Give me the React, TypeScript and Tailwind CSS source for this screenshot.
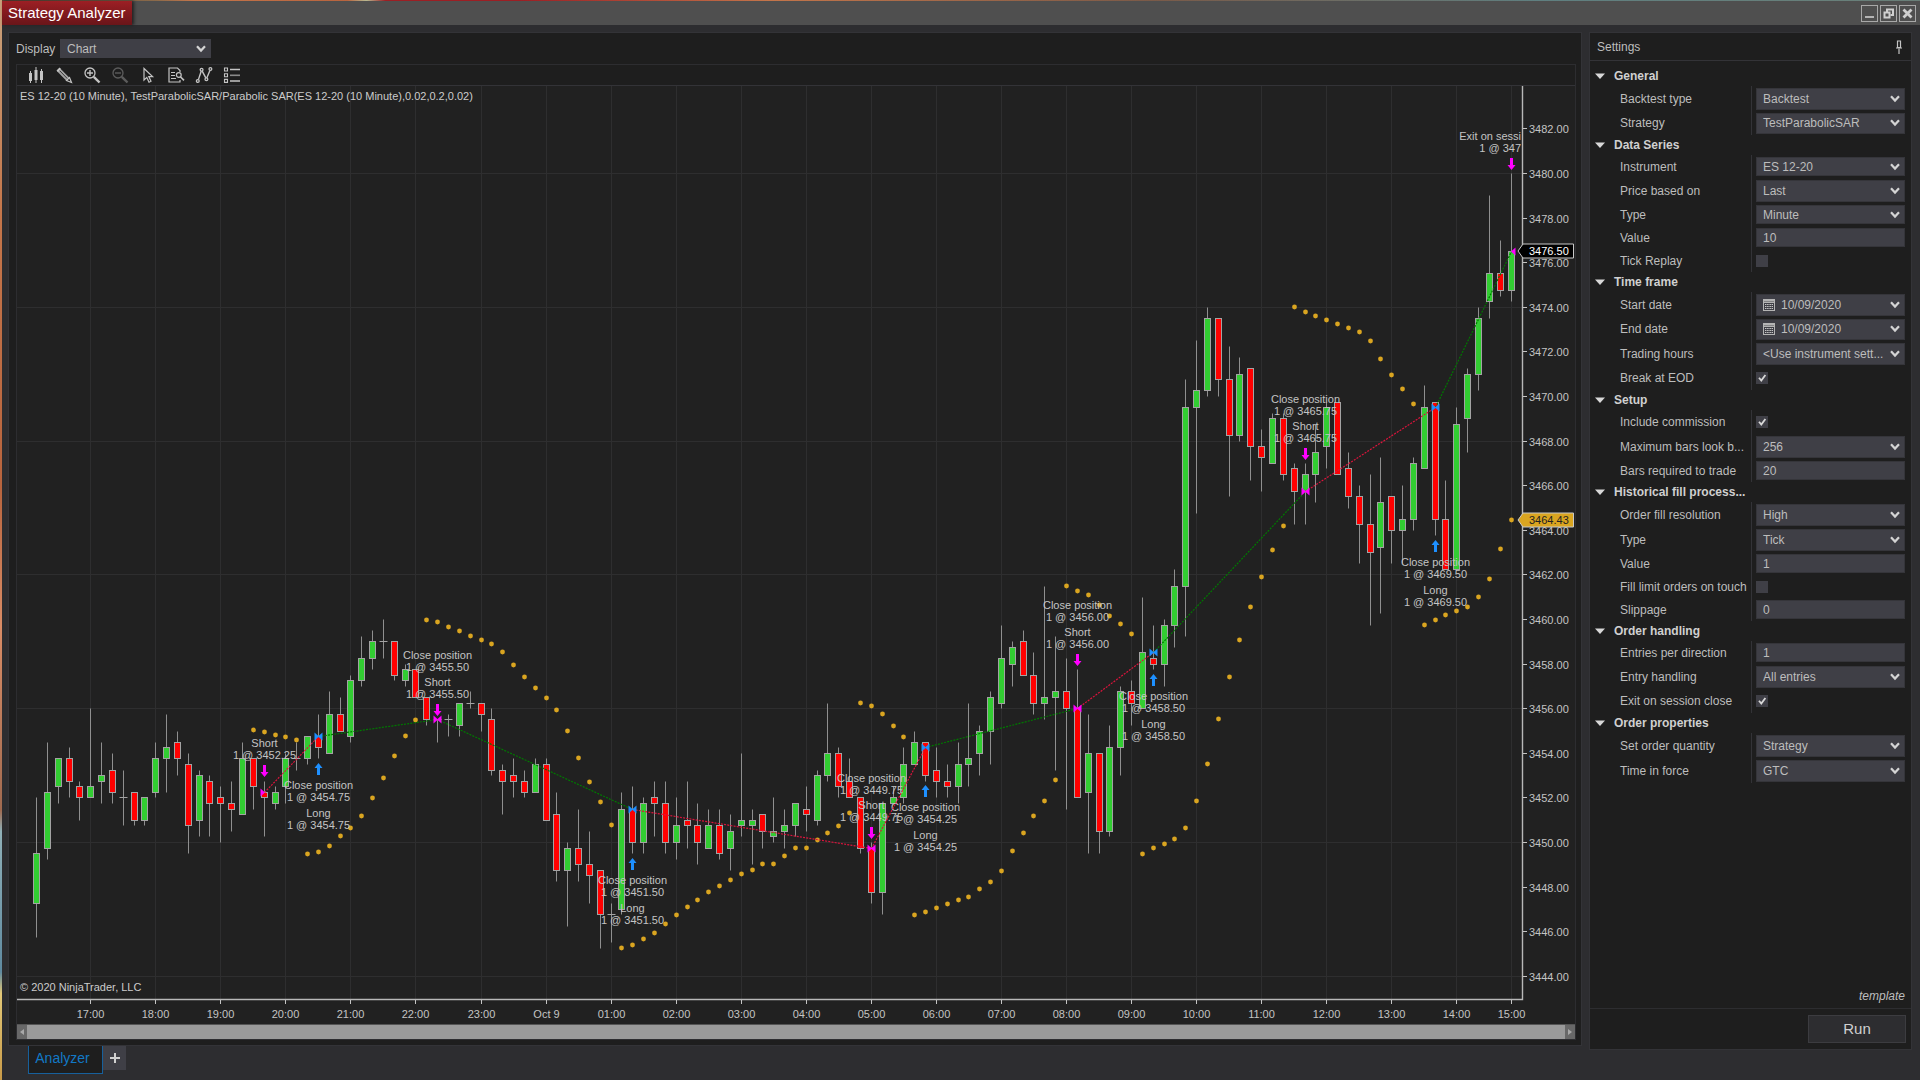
import { useState } from "react";
import type { ReactNode } from "react";
import clsx from "clsx";

// high, body top, body bottom, low (quarter point ticks from 3450), direction
type Candle = [number, number, number, number, "u" | "d"];

const CANDLES: Candle[] = [
  [8, -2, -11, -17, "u"],
  [18, 9, -1, -3, "u"],
  [15, 15, 10, 7, "u"],
  [17, 15, 11, 8, "d"],
  [11, 10, 8, 4, "d"],
  [24, 10, 8, 8, "u"],
  [18, 12, 11, 7, "u"],
  [16, 13, 9, 7, "d"],
  [13, 8, 8, 3, "d"],
  [9, 9, 4, 3, "d"],
  [8, 8, 4, 3, "u"],
  [18, 15, 9, 8, "u"],
  [23, 17, 15, 9, "u"],
  [20, 18, 15, 12, "d"],
  [16, 14, 3, -2, "d"],
  [13, 12, 4, 1, "u"],
  [12, 11, 7, 1, "d"],
  [10, 8, 7, 0, "d"],
  [11, 7, 6, 2, "d"],
  [18, 15, 5, 5, "u"],
  [15, 15, 10, 6, "d"],
  [11, 9, 8, 1, "d"],
  [10, 9, 7, 6, "u"],
  [16, 15, 10, 7, "u"],
  [18, 15, 15, 13, "d"],
  [19, 19, 15, 14, "u"],
  [23, 19, 17, 15, "d"],
  [27, 23, 16, 16, "u"],
  [26, 23, 20, 20, "d"],
  [30, 29, 19, 18, "u"],
  [37, 33, 29, 28, "u"],
  [38, 36, 33, 31, "u"],
  [40, 36, 36, 33, "d"],
  [36, 36, 30, 29, "d"],
  [32, 31, 29, 28, "u"],
  [31, 31, 26, 26, "d"],
  [26, 26, 22, 21, "d"],
  [22, 22, 22, 18, "d"],
  [23, 22, 22, 19, "d"],
  [25, 25, 21, 19, "u"],
  [27, 25, 25, 24, "d"],
  [25, 25, 23, 20, "d"],
  [24, 22, 13, 12, "d"],
  [14, 13, 11, 5, "d"],
  [15, 12, 11, 8, "d"],
  [13, 11, 9, 8, "d"],
  [15, 14, 9, 9, "u"],
  [15, 14, 4, 4, "d"],
  [9, 5, -5, -7, "d"],
  [0, -1, -5, -15, "u"],
  [6, -1, -4, -7, "d"],
  [2, -4, -6, -11, "d"],
  [-5, -5, -13, -19, "d"],
  [-11, -13, -13, -18, "d"],
  [9, 6, -12, -13, "u"],
  [10, 6, 0, -2, "d"],
  [8, 7, 0, -2, "u"],
  [11, 8, 7, 1, "d"],
  [11, 7, 0, -2, "d"],
  [8, 3, 0, -3, "u"],
  [11, 4, 3, -1, "d"],
  [7, 3, 0, -4, "d"],
  [6, 3, -1, -1, "u"],
  [6, 3, -2, -3, "d"],
  [5, 2, -1, -5, "u"],
  [16, 4, 3, 1, "u"],
  [6, 4, 3, -4, "u"],
  [5, 5, 2, -1, "d"],
  [8, 2, 1, 0, "u"],
  [6, 3, 2, -1, "u"],
  [7, 7, 3, 1, "u"],
  [10, 6, 5, 2, "d"],
  [13, 12, 4, 3, "u"],
  [25, 16, 12, 11, "u"],
  [17, 16, 10, 8, "d"],
  [15, 11, 8, 8, "d"],
  [8, 8, -1, -2, "d"],
  [0, -1, -9, -11, "d"],
  [7, 7, -9, -13, "u"],
  [10, 8, 7, 7, "u"],
  [17, 14, 8, 7, "u"],
  [20, 18, 14, 14, "u"],
  [18, 18, 12, 11, "d"],
  [17, 13, 11, 8, "d"],
  [14, 11, 10, 8, "d"],
  [18, 14, 10, 7, "u"],
  [25, 15, 14, 10, "u"],
  [21, 20, 16, 12, "u"],
  [27, 26, 20, 14, "u"],
  [39, 33, 25, 24, "u"],
  [36, 35, 32, 28, "u"],
  [38, 36, 30, 30, "d"],
  [34, 30, 25, 23, "d"],
  [46, 26, 25, 22, "u"],
  [37, 27, 26, 13, "u"],
  [33, 27, 24, 6, "d"],
  [31, 24, 8, 8, "d"],
  [23, 16, 9, -2, "u"],
  [16, 16, 2, -2, "d"],
  [21, 17, 2, 1, "u"],
  [28, 27, 17, 12, "u"],
  [29, 27, 25, 21, "d"],
  [44, 34, 24, 24, "u"],
  [39, 33, 32, 31, "d"],
  [40, 39, 32, 28, "u"],
  [49, 46, 39, 35, "u"],
  [83, 78, 46, 37, "u"],
  [90, 81, 78, 59, "u"],
  [96, 94, 81, 80, "u"],
  [94, 94, 83, 80, "d"],
  [89, 83, 73, 62, "d"],
  [87, 84, 73, 72, "u"],
  [85, 85, 71, 65, "d"],
  [74, 71, 69, 63, "d"],
  [77, 76, 68, 68, "u"],
  [77, 76, 66, 65, "d"],
  [68, 67, 63, 57, "d"],
  [68, 66, 63, 57, "u"],
  [75, 70, 66, 61, "u"],
  [79, 78, 71, 67, "u"],
  [79, 79, 66, 66, "d"],
  [70, 67, 62, 60, "d"],
  [64, 62, 57, 50, "d"],
  [66, 57, 52, 39, "d"],
  [69, 61, 53, 41, "u"],
  [62, 62, 56, 50, "d"],
  [64, 58, 56, 50, "u"],
  [69, 68, 58, 56, "u"],
  [82, 78, 67, 67, "u"],
  [79, 79, 58, 55, "d"],
  [65, 58, 49, 49, "d"],
  [78, 75, 49, 49, "u"],
  [85, 84, 76, 70, "u"],
  [96, 94, 84, 81, "u"],
  [116, 102, 97, 94, "u"],
  [108, 102, 99, 98, "d"],
  [120, 106, 99, 97, "u"],
];

// Parabolic SAR runs: first bar, then one height per bar
const SAR: { start: number; ys: number[] }[] = [
  { start: 20, ys: [730, 732, 735, 737, 740] },
  { start: 25, ys: [854, 852, 846, 836, 828, 816, 798, 778, 756, 736, 720] },
  {
    start: 36,
    ys: [620, 622, 627, 631, 636, 640, 644, 652, 665, 677, 688, 698, 710, 731, 758, 782, 802, 825],
  },
  {
    start: 54,
    ys: [948, 945, 939, 933, 924, 915, 907, 900, 892, 886, 880, 874, 870, 864, 864, 856, 848, 848, 840, 833, 826, 813],
  },
  { start: 76, ys: [703, 706, 714, 726, 737] },
  {
    start: 81,
    ys: [915, 912, 908, 904, 900, 897, 889, 882, 871, 851, 833, 816, 801, 780],
  },
  { start: 95, ys: [586, 591, 595, 605, 616, 624, 634] },
  {
    start: 102,
    ys: [854, 848, 844, 839, 828, 801, 764, 719, 677, 640, 607, 577, 550, 526],
  },
  {
    start: 116,
    ys: [307, 312, 316, 320, 324, 328, 332, 341, 359, 375, 389, 404],
  },
  { start: 128, ys: [625, 620, 615, 611, 607, 597, 579, 549, 520] },
];

type Trade = {
  bar: number;
  tick: number;
  side: "Short" | "Long";
  price: string;
  arrow: number;
  lineTo?: "win" | "loss";
};

const TRADES: Trade[] = [
  { bar: 21, tick: 9, side: "Short", price: "3452.25", arrow: 765, lineTo: "loss" },
  { bar: 26, tick: 19, side: "Long", price: "3454.75", arrow: 763, lineTo: "win" },
  { bar: 37, tick: 22, side: "Short", price: "3455.50", arrow: 704, lineTo: "win" },
  { bar: 55, tick: 6, side: "Long", price: "3451.50", arrow: 858, lineTo: "loss" },
  { bar: 77, tick: -1, side: "Short", price: "3449.75", arrow: 827, lineTo: "loss" },
  { bar: 82, tick: 17, side: "Long", price: "3454.25", arrow: 785, lineTo: "win" },
  { bar: 96, tick: 24, side: "Short", price: "3456.00", arrow: 654, lineTo: "loss" },
  { bar: 103, tick: 34, side: "Long", price: "3458.50", arrow: 674, lineTo: "win" },
  { bar: 117, tick: 63, side: "Short", price: "3465.75", arrow: 448, lineTo: "loss" },
  { bar: 129, tick: 78, side: "Long", price: "3469.50", arrow: 540, lineTo: "win" },
  { bar: 136, tick: 106, side: "Short", price: "3476.50", arrow: 158 },
];

const HOURS = [
  "17:00", "18:00", "19:00", "20:00", "21:00", "22:00", "23:00", "Oct 9",
  "01:00", "02:00", "03:00", "04:00", "05:00", "06:00", "07:00", "08:00",
  "09:00", "10:00", "11:00", "12:00", "13:00", "14:00",
];

const TIME_AXIS = [
  ...HOURS.map((label, i) => ({ label, bar: 5 + i * 6 })),
  { label: "15:00", bar: 136 },
];

const PRICES = Array.from({ length: 20 }, (_, i) => 3444 + i * 2);

const barX = (bar: number) => Math.round(36 + bar * 10.842) + 0.5;
const tickY = (tick: number) => Math.round(842 - tick * 5.575) + 0.5;
const priceY = (price: number) => tickY((price - 3450) * 4);

const AXIS_X = 1522.5;
const AXIS_Y = 999.5;

function Chart() {
  return (
    <svg
      viewBox="17 86 1558 938"
      preserveAspectRatio="xMinYMin meet"
      className="block h-full w-full bg-[#212121] text-[11px]"
      role="img"
      aria-label="ES 12-20 price chart"
    >
      <g stroke="#2e2e2f" strokeWidth={1}>
        {TIME_AXIS.map(({ label, bar }) => (
          <line key={label} x1={barX(bar)} x2={barX(bar)} y1={86} y2={AXIS_Y} />
        ))}
        {PRICES.filter((p) => (p - 3444) % 6 === 0).map((p) => (
          <line key={p} x1={17} x2={AXIS_X} y1={priceY(p)} y2={priceY(p)} />
        ))}
      </g>

      {CANDLES.map(([high, top, bottom, low, dir], i) => {
        const x = barX(i);
        const y = tickY(top);
        return (
          <g key={i} stroke="#a3a3a3">
            <line x1={x} x2={x} y1={tickY(high)} y2={tickY(low)} stroke="#8f8f8f" />
            {top === bottom ? (
              <line x1={x - 4} x2={x + 4} y1={y} y2={y} />
            ) : (
              <rect
                x={x - 3}
                y={y}
                width={6}
                height={tickY(bottom) - y}
                fill={dir === "u" ? "#32cd32" : "#ff0000"}
              />
            )}
          </g>
        );
      })}

      <g fill="#daa520">
        {SAR.map(({ start, ys }) =>
          ys.map((y, i) => (
            <circle key={start + i} cx={barX(start + i)} cy={y} r={2.4} />
          ))
        )}
      </g>

      {TRADES.map((t) => (
        <TradeText key={t.bar} trade={t} />
      ))}

      {TRADES.slice(0, -1).map((t, i) => {
        const next = TRADES[i + 1];
        return (
          <line
            key={t.bar}
            x1={barX(t.bar)}
            y1={tickY(t.tick)}
            x2={barX(next.bar)}
            y2={tickY(next.tick)}
            stroke={t.lineTo === "win" ? "#007800" : "#dc143c"}
            strokeWidth={1.2}
            strokeDasharray="2 1.2"
          />
        );
      })}

      {TRADES.map((t, i) => (
        <TradeMarker
          key={t.bar}
          trade={t}
          entry={i < TRADES.length - 1}
          exit={i > 0}
        />
      ))}

      {/* Axes */}
      <path d={`M${AXIS_X} 86V${AXIS_Y}H17`} fill="none" stroke="#b8b8b8" strokeWidth={1.4} />
      <g fill="#c4c4c4" stroke="none">
        {PRICES.map((p) => (
          <g key={p}>
            <rect x={1523} y={priceY(p) - 0.5} width={4} height={1} />
            <text x={1529} y={priceY(p) + 4}>
              {p.toFixed(2)}
            </text>
          </g>
        ))}
        {TIME_AXIS.map(({ label, bar }) => (
          <g key={label}>
            <rect x={barX(bar) - 0.5} y={1000} width={1} height={4} />
            <text x={barX(bar)} y={1018} textAnchor="middle">
              {label}
            </text>
          </g>
        ))}
      </g>

      <PriceTag y={251} label="3476.50" fill="#000000" ink="#ffffff" />
      <PriceTag y={520} label="3464.43" fill="#daa520" ink="#222222" />

      <g fill="#cccccc">
        <text x={20} y={100}>
          ES 12-20 (10 Minute), TestParabolicSAR/Parabolic SAR(ES 12-20 (10 Minute),0.02,0.2,0.02)
        </text>
        <text x={20} y={991}>
          © 2020 NinjaTrader, LLC
        </text>
      </g>
    </svg>
  );
}

function TradeText({ trade }: { trade: Trade }) {
  const { bar, side, price, arrow } = trade;
  const x = barX(bar);

  // The last label runs into the price axis and is cut there
  if (bar === 136) {
    return (
      <g fill="#c4c4c4" textAnchor="end">
        <text x={1521} y={140}>Exit on sessi</text>
        <text x={1521} y={152}>1 @ 347</text>
      </g>
    );
  }

  const rows =
    side === "Short"
      ? [arrow - 45, arrow - 33, arrow - 18, arrow - 6]
      : [arrow + 26, arrow + 38, arrow + 54, arrow + 66];

  return (
    <g fill="#c4c4c4" textAnchor="middle">
      {bar !== 21 && (
        <>
          <text x={x} y={rows[0]}>Close position</text>
          <text x={x} y={rows[1]}>1 @ {price}</text>
        </>
      )}
      <text x={x} y={rows[2]}>{side}</text>
      <text x={x} y={rows[3]}>1 @ {price}</text>
    </g>
  );
}

function TradeMarker({ trade, entry, exit }: { trade: Trade; entry: boolean; exit: boolean }) {
  const x = barX(trade.bar);
  const y = tickY(trade.tick);
  const a = trade.arrow;
  const isShort = trade.side === "Short";

  return (
    <g fill={isShort ? "#ff00ff" : "#1e90ff"}>
      {entry && <path d={`M${x - 4} ${y - 4}L${x + 0.5} ${y}L${x - 4} ${y + 4}Z`} />}
      {exit && <path d={`M${x + 4} ${y - 4}L${x - 0.5} ${y}L${x + 4} ${y + 4}Z`} />}
      {isShort ? (
        <path d={`M${x - 1.5} ${a}h3v7h2.5l-4 5l-4 -5h2.5z`} />
      ) : (
        <path d={`M${x - 1.5} ${a + 12}h3v-7h2.5l-4 -5l-4 5h2.5z`} />
      )}
    </g>
  );
}

function PriceTag({ y, label, fill, ink }: { y: number; label: string; fill: string; ink: string }) {
  return (
    <g>
      <path
        d={`M1518 ${y}L1523 ${y - 7}H1573.5V${y + 7}H1523Z`}
        fill={fill}
        stroke="#c8c8c8"
        strokeWidth={1}
      />
      <text x={1529} y={y + 4} fill={ink}>
        {label}
      </text>
    </g>
  );
}

function Chevron({ className }: { className?: string }) {
  return (
    <svg viewBox="0 0 10 8" className={clsx("h-2 w-2.5", className)} aria-hidden="true">
      <path d="M1 1.2L5 5.6L9 1.2" fill="none" stroke="#d4d4d4" strokeWidth={2.2} />
    </svg>
  );
}

function CalendarIcon({ className }: { className?: string }) {
  return (
    <svg viewBox="0 0 12 12" className={clsx("h-3 w-3", className)} aria-hidden="true">
      <path d="M0 0h12v12H0z" fill="#b4b4b4" />
      <path d="M1 4h10v7H1z" fill="#3f3f46" />
      <path d="M1 2.5h10" stroke="#77777a" strokeWidth={0.8} />
      <path d="M2 5.5h8M2 7.5h8M2 9.5h8" stroke="#c8c8c8" strokeWidth={1} strokeDasharray="1.2 0.5" />
    </svg>
  );
}

const TOOLS: { name: string; icon: ReactNode; dim?: boolean }[] = [
  {
    name: "Chart style",
    icon: (
      <g fill="currentColor">
        <path d="M1 6h3v8H1zM2 4h1v12H2zM6.5 3h3v10h-3zM7.5 0h1v16h-1zM12 4h3v9h-3zM13 2h1v14h-1z" />
      </g>
    ),
  },
  {
    name: "Drawing tools",
    icon: (
      <g>
        <path d="M4 1.2L13.2 10.4L10.2 13.4L1 4.2Z" fill="#a4a4a4" />
        <path d="M3.2 3.2L11.5 11.8" stroke="#2a2a2a" strokeWidth={0.9} />
        <path d="M3.5 0.5L0.5 3.5L2 5L5 2Z" fill="currentColor" />
        <path d="M13.5 10.5L15.5 15.5L10.5 13.5Z" fill="none" stroke="currentColor" strokeWidth={1.2} />
      </g>
    ),
  },
  {
    name: "Zoom in",
    icon: (
      <g fill="none" stroke="currentColor">
        <circle cx={6} cy={6} r={5} strokeWidth={1.3} />
        <path d="M6 3v6M3 6h6" strokeWidth={1.4} />
        <path d="M9.8 9.8L15.5 15.5" strokeWidth={2.4} />
      </g>
    ),
  },
  {
    name: "Zoom out",
    dim: true,
    icon: (
      <g fill="none" stroke="currentColor">
        <circle cx={6} cy={6} r={5} strokeWidth={1.3} />
        <path d="M3 6h6" strokeWidth={1.4} />
        <path d="M9.8 9.8L15.5 15.5" strokeWidth={2.4} />
      </g>
    ),
  },
  {
    name: "Cursor",
    icon: (
      <path
        d="M4 1.5V13L6.8 10.4L9 15.2L11 14.2L8.8 9.6H12.6Z"
        fill="none"
        stroke="currentColor"
        strokeWidth={1.2}
      />
    ),
  },
  {
    name: "Data box",
    icon: (
      <g fill="none" stroke="currentColor" strokeWidth={1.2}>
        <path d="M12 5V3.5L9.5 1H1v14h11v-2" />
        <path d="M3 5.5h4M3 8.5h4M3 11.5h5" />
        <circle cx={10.8} cy={8} r={2.4} />
        <path d="M12.4 9.8L16 13.4" strokeWidth={1.6} />
      </g>
    ),
  },
  {
    name: "Indicators",
    icon: (
      <g fill="none" stroke="currentColor" strokeWidth={1.3}>
        <path d="M2.4 12.6L5.2 4.2M6.2 4.2L9.8 10.8M10.9 10.8L13.9 3.4" strokeWidth={1.4} />
        <circle cx={1.8} cy={14} r={1.4} />
        <circle cx={5.6} cy={2.8} r={1.4} />
        <circle cx={10.4} cy={12.2} r={1.4} />
        <circle cx={14.4} cy={2} r={1.4} />
      </g>
    ),
  },
  {
    name: "Properties",
    icon: (
      <g fill="none" stroke="currentColor">
        <path d="M0.5 1h3v3h-3zM0.5 6.8h3v3h-3zM0.5 12.4h3v3h-3z" strokeWidth={1.1} />
        <path d="M6 2.5h10M6 14h10" strokeWidth={1.6} />
        <path d="M6 8.3h10" stroke="#8a8a8a" strokeWidth={1.6} />
      </g>
    ),
  },
];

type Row = {
  label: string;
  kind: "select" | "text" | "check" | "date";
  value?: string;
  checked?: boolean;
  size: "sm" | "md" | "lg";
};

const GROUPS: { title: string; rows: Row[] }[] = [
  {
    title: "General",
    rows: [
      { label: "Backtest type", kind: "select", value: "Backtest", size: "lg" },
      { label: "Strategy", kind: "select", value: "TestParabolicSAR", size: "md" },
    ],
  },
  {
    title: "Data Series",
    rows: [
      { label: "Instrument", kind: "select", value: "ES 12-20", size: "sm" },
      { label: "Price based on", kind: "select", value: "Last", size: "lg" },
      { label: "Type", kind: "select", value: "Minute", size: "sm" },
      { label: "Value", kind: "text", value: "10", size: "sm" },
      { label: "Tick Replay", kind: "check", checked: false, size: "sm" },
    ],
  },
  {
    title: "Time frame",
    rows: [
      { label: "Start date", kind: "date", value: "10/09/2020", size: "lg" },
      { label: "End date", kind: "date", value: "10/09/2020", size: "md" },
      { label: "Trading hours", kind: "select", value: "<Use instrument sett...", size: "lg" },
      { label: "Break at EOD", kind: "check", checked: true, size: "md" },
    ],
  },
  {
    title: "Setup",
    rows: [
      { label: "Include commission", kind: "check", checked: true, size: "md" },
      { label: "Maximum bars look b...", kind: "select", value: "256", size: "lg" },
      { label: "Bars required to trade", kind: "text", value: "20", size: "sm" },
    ],
  },
  {
    title: "Historical fill process...",
    rows: [
      { label: "Order fill resolution", kind: "select", value: "High", size: "lg" },
      { label: "Type", kind: "select", value: "Tick", size: "lg" },
      { label: "Value", kind: "text", value: "1", size: "sm" },
      { label: "Fill limit orders on touch", kind: "check", checked: false, size: "sm" },
      { label: "Slippage", kind: "text", value: "0", size: "sm" },
    ],
  },
  {
    title: "Order handling",
    rows: [
      { label: "Entries per direction", kind: "text", value: "1", size: "sm" },
      { label: "Entry handling", kind: "select", value: "All entries", size: "lg" },
      { label: "Exit on session close", kind: "check", checked: true, size: "md" },
    ],
  },
  {
    title: "Order properties",
    rows: [
      { label: "Set order quantity", kind: "select", value: "Strategy", size: "lg" },
      { label: "Time in force", kind: "select", value: "GTC", size: "lg" },
    ],
  },
];

const ROW_HEIGHT = { sm: "h-[23px]", md: "h-6", lg: "h-[25px]" };
const FIELD_HEIGHT = { sm: "h-[19px]", md: "h-[21px]", lg: "h-[22px]" };

function SettingRow({ id, row }: { id: string; row: Row }) {
  const [checked, setChecked] = useState(!!row.checked);
  const field = clsx(
    "w-full border border-[#35353a] bg-[#3f3f46] text-[#bdbdbd] outline-none",
    FIELD_HEIGHT[row.size]
  );

  return (
    <div className={clsx("flex", ROW_HEIGHT[row.size])}>
      <label htmlFor={id} className="flex flex-1 items-center whitespace-nowrap border-r border-[#333337] pl-[30px]">
        {row.label}
      </label>
      <div className="relative ml-1 mr-[6px] flex w-[149px] items-center">
        {row.kind === "text" && (
          <input id={id} type="text" defaultValue={row.value} className={clsx(field, "px-[6px]")} />
        )}
        {(row.kind === "select" || row.kind === "date") && (
          <>
            <select
              id={id}
              className={clsx(field, "appearance-none pr-5", row.kind === "date" ? "pl-6" : "pl-[6px]")}
            >
              <option>{row.value}</option>
            </select>
            <Chevron className="pointer-events-none absolute right-[5px]" />
          </>
        )}
        {row.kind === "date" && (
          <CalendarIcon className="pointer-events-none absolute left-[7px]" />
        )}
        {row.kind === "check" && (
          <>
            <input
              id={id}
              type="checkbox"
              checked={checked}
              onChange={(e) => setChecked(e.target.checked)}
              className="h-3 w-3 appearance-none bg-[#3f3f46]"
            />
            {checked && (
              <svg viewBox="0 0 12 12" className="pointer-events-none absolute left-0 h-3 w-3" aria-hidden="true">
                <path d="M3 5.8L5.3 8.6L9.4 3" fill="none" stroke="#d8d8d8" strokeWidth={1.8} />
              </svg>
            )}
          </>
        )}
      </div>
    </div>
  );
}

function SettingsPanel() {
  return (
    <aside className="mb-[30px] flex w-[323px] flex-none flex-col border border-[#333337] bg-[#1e1e1e] text-[12px] text-[#bdbdbd]">
      <header className="flex h-7 items-center justify-between border-b border-[#333337] pl-[7px] pr-2">
        <h2>Settings</h2>
        <button type="button" aria-label="Pin panel" className="text-[#c4c4c4]">
          <svg viewBox="0 0 8 14" className="h-3.5 w-2" fill="none" stroke="currentColor">
            <path d="M2.5 1h3v6.5h-3zM1 8h6" strokeWidth={1.2} />
            <path d="M4 8.5V14" strokeWidth={1.2} />
          </svg>
        </button>
      </header>

      <div className="flex-1 pt-[5px]">
        {GROUPS.map((group, g) => (
          <section key={group.title}>
            <h3 className="flex h-5 items-center font-bold text-[#d0d0d0]">
              <svg viewBox="0 0 10 6" className="ml-[5px] mr-[9px] h-[6px] w-2.5" aria-hidden="true">
                <path d="M0 0.5h10L5 6z" fill="#d8d8d8" />
              </svg>
              {group.title}
            </h3>
            {group.rows.map((row, r) => (
              <SettingRow key={row.label} id={`setting-${g}-${r}`} row={row} />
            ))}
          </section>
        ))}
      </div>

      <a href="#template" className="self-end pb-1 pr-[6px] italic leading-4">
        template
      </a>
      <footer className="flex h-[41px] items-center justify-end border-t border-[#2d2d30] pr-[5px]">
        <button
          type="button"
          className="h-7 w-[98px] border border-[#3c3c40] bg-[#2d2d30] text-[15px] text-[#d0d0d0]"
        >
          Run
        </button>
      </footer>
    </aside>
  );
}

function WindowButton({ label, children }: { label: string; children: ReactNode }) {
  return (
    <button type="button" aria-label={label} className="h-[17px] w-[17px] border border-[#a8a8a8]">
      <svg viewBox="0 0 15 15" className="h-[15px] w-[15px]" fill="none" stroke="#cfcfcf">
        {children}
      </svg>
    </button>
  );
}

function TitleBar() {
  return (
    <header className="flex h-6 items-center justify-between bg-[#4f4f4f]">
      <h1 className="flex h-full items-center bg-linear-to-b from-[#9c1f24] to-[#6a1519] px-[6px] text-[15px] text-white shadow-[2px_0_3px_#222]">
        Strategy Analyzer
      </h1>
      <div className="flex gap-[2px] pr-1">
        <WindowButton label="Minimize">
          <path d="M3 11h9" strokeWidth={1.6} />
        </WindowButton>
        <WindowButton label="Restore">
          <path d="M6 6V3.5h6V9H9.5" strokeWidth={2} />
          <path d="M3.5 6.5h5v5h-5z" strokeWidth={2} />
        </WindowButton>
        <WindowButton label="Close">
          <path d="M3.5 3.5l8 8M11.5 3.5l-8 8" strokeWidth={2.8} />
        </WindowButton>
      </div>
    </header>
  );
}

function ChartPanel() {
  return (
    <main className="flex min-h-0 flex-1 flex-col border border-[#333337] bg-[#1e1e1e] pb-[5px] pl-[7px] pr-[5px]">
      <div className="flex h-[31px] items-center text-[12px] text-[#bdbdbd]">
        <label htmlFor="display" className="w-[44px]">
          Display
        </label>
        <div className="relative flex items-center">
          <select
            id="display"
            className="h-[19px] w-[151px] appearance-none bg-[#3f3f46] px-[7px] outline-none"
          >
            <option>Chart</option>
          </select>
          <Chevron className="pointer-events-none absolute right-[5px]" />
        </div>
      </div>

      <div className="flex min-h-0 flex-1 flex-col border border-[#2d2d30]">
        <div className="flex h-[21px] items-center border-b border-[#333337] pl-[5px]">
          {TOOLS.map((tool) => (
            <button
              key={tool.name}
              type="button"
              aria-label={tool.name}
              disabled={tool.dim}
              className={clsx(
                "flex w-7 justify-center",
                tool.dim ? "text-[#5c5c5c]" : "text-[#c4c4c4]"
              )}
            >
              <svg viewBox="0 0 16 16" className="h-4 w-4 overflow-visible">
                {tool.icon}
              </svg>
            </button>
          ))}
        </div>

        <div className="min-h-0 flex-1">
          <Chart />
        </div>

        <div className="flex h-[15px] items-stretch border-t border-[#555] bg-[#9a9a9a]">
          <button type="button" aria-label="Scroll left" className="flex w-[10px] items-center justify-center bg-[#686868]">
            <svg viewBox="0 0 4 6" className="h-[6px] w-1" fill="#a8a8a8">
              <path d="M4 0v6L0 3z" />
            </svg>
          </button>
          <div className="flex-1" />
          <button type="button" aria-label="Scroll right" className="flex w-[10px] items-center justify-center bg-[#686868]">
            <svg viewBox="0 0 4 6" className="h-[6px] w-1" fill="#a8a8a8">
              <path d="M0 0v6l4-3z" />
            </svg>
          </button>
        </div>
      </div>
    </main>
  );
}

export default function App() {
  return (
    <div className="h-screen w-full overflow-hidden bg-[linear-gradient(#c9a27c,#c4754a_20%,#b8643e_45%,#d98c66_58%,#a06a50_75%,#8fb0b8_77%,#5f8aa0_90%,#e3c878_92%,#c89a48)] pl-[2px] font-['Liberation_Sans',Arial,sans-serif]">
      <div className="flex h-full flex-col bg-[#2d2d30]">
        {/* Sliver of the desktop above the window */}
        <div className="h-px flex-none bg-[linear-gradient(90deg,#5a4030,#8a6a4a_8%,#c4754a_10%,#b8643e_18%,#b8b890_19%,#9c1f24_20%,#9c1f24_27%,#c4754a_40%,#7a5a48_60%,#5f7f80_80%,#6a7f78)]" />
        <TitleBar />
        <div className="flex min-h-0 flex-1 gap-[7px] pl-[6px] pr-2 pt-[7px]">
          <div className="flex min-w-0 flex-1 flex-col">
            <ChartPanel />
            <nav className="flex h-[34px] flex-none items-start pl-5">
              <button
                type="button"
                className="flex h-7 w-[75px] items-center justify-center border border-t-0 border-[#17609c] bg-[#1e1e1e] pb-[3px] pr-[6px] text-[14px] text-[#1279c6]"
              >
                Analyzer
              </button>
              <button
                type="button"
                aria-label="New tab"
                className="flex h-6 w-[23px] items-center justify-center bg-[#3f3f46]"
              >
                <svg viewBox="0 0 12 12" className="h-3 w-3" stroke="#d0d0d0" strokeWidth={2}>
                  <path d="M6 1v10M1 6h10" />
                </svg>
              </button>
            </nav>
          </div>
          <SettingsPanel />
        </div>
      </div>
    </div>
  );
}
